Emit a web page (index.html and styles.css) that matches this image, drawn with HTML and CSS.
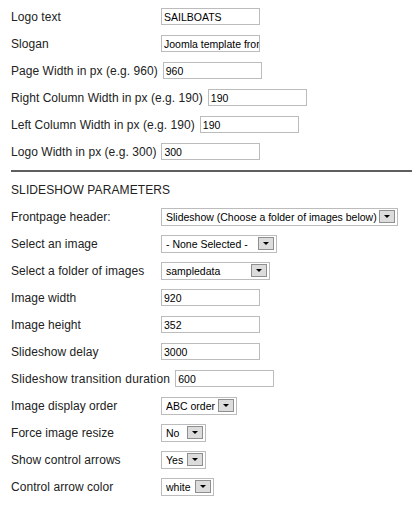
FILE: index.html
```html
<!DOCTYPE html>
<html>
<head>
<meta charset="utf-8">
<link rel="stylesheet" href="styles.css">
</head>
<body>
<div class="form">
  <div class="row"><span class="lbl">Logo text</span><span class="inp">SAILBOATS</span></div>
  <div class="row"><span class="lbl">Slogan</span><span class="inp">Joomla template from</span></div>
  <div class="row"><span class="lbl">Page Width in px (e.g. 960)</span><span class="inp">960</span></div>
  <div class="row"><span class="lbl">Right Column Width in px (e.g. 190)</span><span class="inp">190</span></div>
  <div class="row"><span class="lbl">Left Column Width in px (e.g. 190)</span><span class="inp">190</span></div>
  <div class="row"><span class="lbl">Logo Width in px (e.g. 300)</span><span class="inp">300</span></div>
  <div class="rule"></div>
  <div class="row head">SLIDESHOW PARAMETERS</div>
  <div class="row"><span class="lbl">Frontpage header:</span><span class="sel w237"><span class="val">Slideshow (Choose a folder of images below)</span><span class="btn"></span></span></div>
  <div class="row"><span class="lbl">Select an image</span><span class="sel w116"><span class="val">- None Selected -</span><span class="btn"></span></span></div>
  <div class="row"><span class="lbl">Select a folder of images</span><span class="sel w109"><span class="val">sampledata</span><span class="btn"></span></span></div>
  <div class="row"><span class="lbl">Image width</span><span class="inp">920</span></div>
  <div class="row"><span class="lbl">Image height</span><span class="inp">352</span></div>
  <div class="row"><span class="lbl">Slideshow delay</span><span class="inp">3000</span></div>
  <div class="row"><span class="lbl wide">Slideshow transition duration</span><span class="inp">600</span></div>
  <div class="row"><span class="lbl">Image display order</span><span class="sel w76"><span class="val">ABC order</span><span class="btn"></span></span></div>
  <div class="row"><span class="lbl">Force image resize</span><span class="sel w45"><span class="val">No</span><span class="btn"></span></span></div>
  <div class="row"><span class="lbl">Show control arrows</span><span class="sel w45"><span class="val">Yes</span><span class="btn"></span></span></div>
  <div class="row"><span class="lbl">Control arrow color</span><span class="sel w53"><span class="val">white</span><span class="btn"></span></span></div>
</div>
</body>
</html>
```
FILE: styles.css
```css
html, body {
  margin: 0;
  padding: 0;
  background: #fff;
}
.form {
  padding: 3px 0 0 11px;
  font-family: "Liberation Sans", Arial, sans-serif;
  font-size: 12px;
  color: #222;
}
.row {
  display: flex;
  align-items: center;
  height: 27px;
}
.lbl {
  flex-shrink: 0;
  min-width: 145px;
  margin-right: 5px;
  white-space: nowrap;
  letter-spacing: 0.05px;
}
.lbl.wide {
  letter-spacing: 0.2px;
}
.inp {
  box-sizing: border-box;
  width: 99px;
  height: 17px;
  border: 1px solid #bcbcbc;
  font-size: 10.5px;
  line-height: 16px;
  padding-left: 2px;
  color: #000;
  overflow: hidden;
  white-space: nowrap;
}
.rule {
  height: 2px;
  background: #5e5e5e;
  margin: 5px 0 4px;
}
.head {
  font-size: 12px;
  letter-spacing: 0.1px;
}
.sel {
  box-sizing: border-box;
  display: flex;
  align-items: center;
  height: 18px;
  border: 1px solid #bcbcbc;
  padding: 0 2px 0 4px;
  font-size: 10.5px;
  color: #000;
  white-space: nowrap;
}
.val {
  flex: 1;
  overflow: hidden;
}
.btn {
  box-sizing: border-box;
  width: 16px;
  height: 13px;
  background: #dcdcdc;
  border: 1px solid #8f8f8f;
  display: flex;
  align-items: center;
  justify-content: center;
}
.btn::after {
  content: "";
  border-left: 3px solid transparent;
  border-right: 3px solid transparent;
  border-top: 3px solid #000;
}
.w237 { width: 237px; }
.w116 { width: 116px; }
.w109 { width: 109px; }
.w76 { width: 76px; }
.w45 { width: 45px; }
.w53 { width: 53px; }
```
